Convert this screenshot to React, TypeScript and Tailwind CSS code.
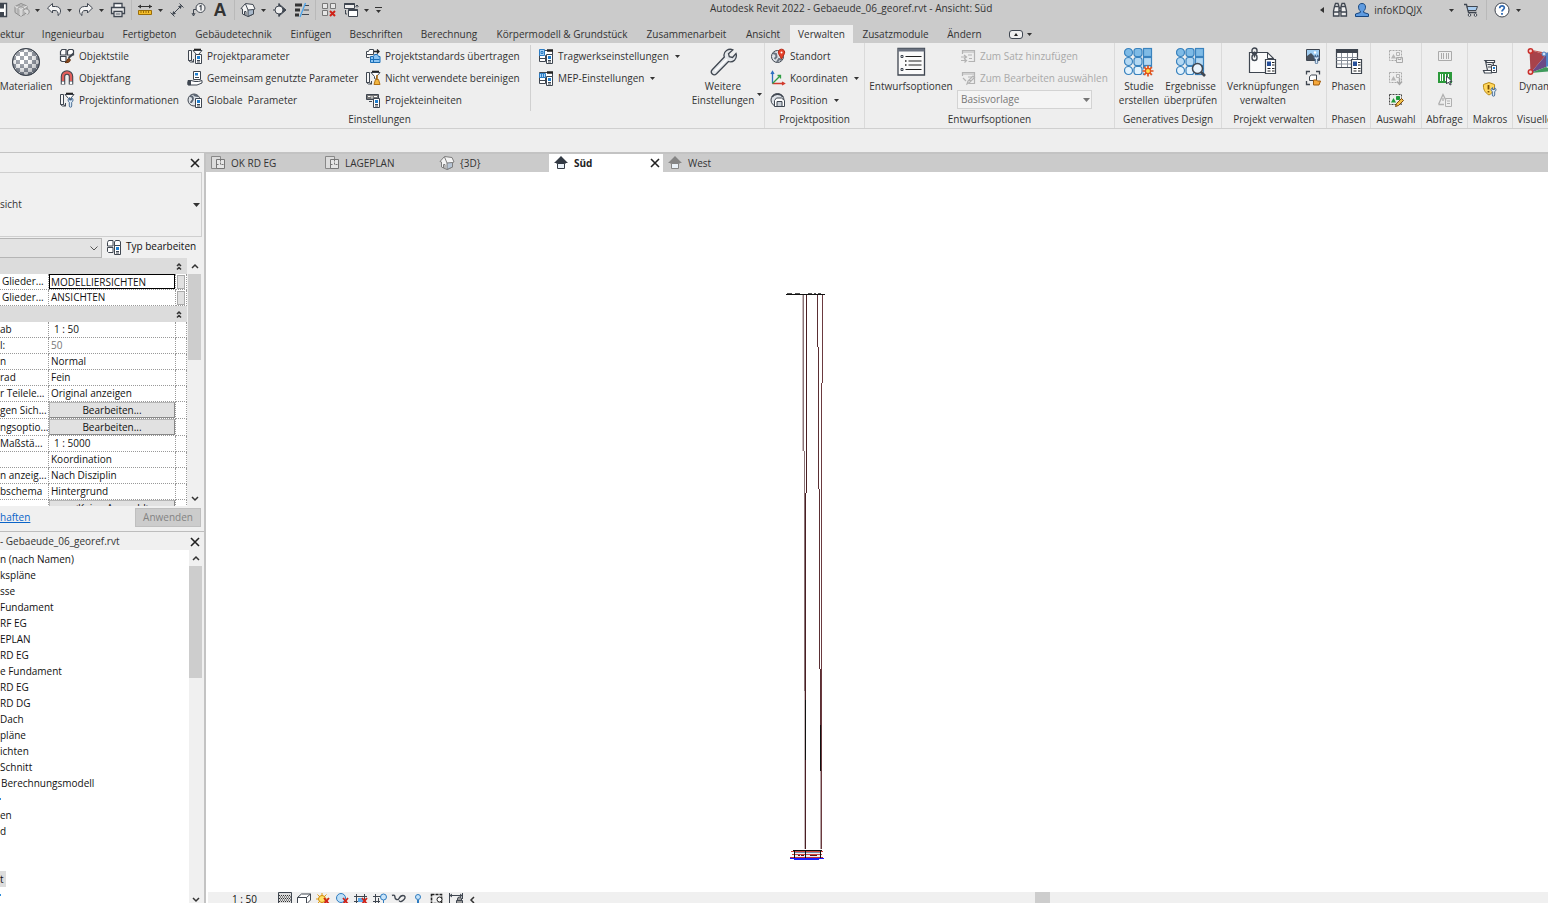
import type { ReactNode } from "react";
import clsx from "clsx";

const INK = "#3f4650";
const BLUE = "#1f7fd0";

type IconProps = { children: ReactNode; big?: boolean; className?: string };

function Icon({ children, big, className }: IconProps) {
  return (
    <svg
      viewBox={big ? "0 0 30 30" : "0 0 16 16"}
      className={clsx("shrink-0", big ? "h-[30px] w-[30px]" : "h-4 w-4", className)}
      fill="none"
      stroke={INK}
      strokeWidth="1"
      aria-hidden="true"
    >
      {children}
    </svg>
  );
}

function Caret({ className }: { className?: string }) {
  return (
    <svg viewBox="0 0 5 3" className={clsx("h-[3px] w-[5px] shrink-0", className)} aria-hidden="true">
      <path d="M0 0h5L2.500 3z" fill="#333" />
    </svg>
  );
}

function CaretButton({ label }: { label: string }) {
  return (
    <button type="button" aria-label={label} className="flex h-4 w-4 items-center justify-center pr-0.5">
      <Caret />
    </button>
  );
}

function Divider() {
  return <span className="mx-[5px] h-5 w-px shrink-0 bg-[#b9b9b9]" />;
}

/* ---------- shared icon parts ---------- */

// small sheet with a blue header, sits in the lower right corner of many icons
function MiniSheet() {
  return (
    <g>
      <path d="M8.500 6.500h6v9h-6z" fill="#fff" />
      <path d="M10 8h3v3h-3z" fill={BLUE} stroke="none" />
      <path d="M10 12.500h3M10 14h3" />
    </g>
  );
}

function BeamPart() {
  return <path d="M1.500 2.500h3v10h-3zM4.500 12.500l2 1.500v-3M1.500 12.500l2 1.500h3" fill="#f6f6f6" />;
}

function FunnelPart() {
  return (
    <g>
      <path d="M6 2.500h9l-3.500 4v3l-2-1v-2z" fill="#fff" />
      <path d="M7 1.500h7" stroke="#222" strokeWidth="1.600" />
    </g>
  );
}

/* ---------- quick access icons ---------- */

const SaveIcon = () => (
  <svg viewBox="0 0 8 16" className="h-4 w-2 shrink-0" fill="none" stroke={INK} aria-hidden="true">
    <path d="M0 1.500h6.500v13H0" fill="#fff" strokeWidth="1.400" />
    <path d="M0 2h4v4.500H0zM0 10h4v4.500H0z" fill={INK} stroke="none" />
  </svg>
);

const CubeIcon = () => (
  <Icon>
    <path d="M1 4.500L7 1.500l6 2.500v6.500l-6 4-6-4z" fill="#c3c3c3" stroke="#8d8d8d" />
    <path d="M1 4.500l6 3v7M7 7.500L13 4" stroke="#e8e8e8" />
    <path d="M4 3l6 3v7.500M10 2.800L4 6v6.500" stroke="#a2a2a2" />
    <path d="M9.500 8.500a3 3 0 1 1 4 4" stroke="#8d8d8d" fill="#d9d9d9" />
  </Icon>
);

const UndoIcon = ({ flip }: { flip?: boolean }) => (
  <Icon>
    <path
      d={flip
        ? "M14.500 6l-5-4.500v3H6.500C3 4.500 1.500 6.500 1.500 9c0 2 1 3.500 2.500 4.500-.5-3 .5-5 3-5h2.500v2.500z"
        : "M1.500 6l5-4.500v3h3c3.500 0 5 2 5 4.500 0 2-1 3.500-2.500 4.500.5-3-.5-5-3-5H6.500v2.500z"}
      fill="#f3f3f3"
    />
  </Icon>
);

const PrintIcon = () => (
  <Icon>
    <path d="M4 5.500v-4h8v4" fill="#fff" strokeWidth="1.300" />
    <path d="M1.500 5.500h13v6h-13z" fill="#e9e9e9" strokeWidth="1.300" />
    <path d="M4 9.500h8v5H4z" fill="#fff" strokeWidth="1.300" />
    <path d="M5.500 12h5" />
  </Icon>
);

const MeasureIcon = () => (
  <Icon>
    <path d="M1 4.500h14" stroke="#333" />
    <path d="M1 4.500l3-2v4zM15 4.500l-3-2v4z" fill="#333" stroke="none" />
    <path d="M1.500 8.500h13v4h-13z" fill="#f5bf2a" stroke="#9a6d08" />
    <path d="M4 9v2M6.500 9v2M9 9v2M11.500 9v2" stroke="#9a6d08" />
  </Icon>
);

const DimensionIcon = () => (
  <Icon>
    <path d="M3 13L13 3M1.500 10.500l4 4M10.500 1.500l4 4" />
    <path d="M3 13l1.200-4L7 11.800zM13 3L9 4.200 11.800 7z" fill={INK} stroke="none" />
  </Icon>
);

const TagIcon = () => (
  <Icon>
    <circle cx="9.500" cy="6" r="4.500" fill="#f3f3f3" />
    <path d="M8.500 4.500L10 3.500v5" strokeWidth="1.200" />
    <path d="M5 7.500H2.500v5M1 11l1.500 3L4 11" />
  </Icon>
);

const HouseIcon = ({ muted }: { muted?: boolean }) => (
  <Icon>
    <g stroke={muted ? "#7d7d7d" : INK}>
      <path d="M1 6.500L5.500 1.500l7.500 1 2 4.500-1.500.5V12L8 14.500 2.500 12V7z" fill="#f4f4f4" />
      <path d="M8 8l5.500-.5V12L8 14.500z" fill={muted ? "#b8c6d6" : "#a9b9cb"} />
      <path d="M8 8l-2.500-6M4.500 13V9.500H6v4" />
    </g>
  </Icon>
);

const SectionIcon = () => (
  <Icon>
    <path d="M7 2l7 6-7 6z" fill={INK} stroke={INK} />
    <circle cx="7" cy="8" r="4" fill="#eee" />
    <path d="M1 8h2M7 1v3M7 12v3" />
  </Icon>
);

const ThinLinesIcon = () => (
  <Icon>
    <path d="M1 3h7M1 8h5M1 13h4" stroke="#333" strokeWidth="3" />
    <path d="M11 3.500h4M9.500 8H15M8 12.500h7" />
    <path d="M11.500 1L6 15" stroke="#4aa3ea" strokeWidth="1.300" />
  </Icon>
);

const CloseHiddenIcon = () => (
  <Icon>
    <path d="M1.500 1.500h5v5h-5zM1.500 8.500h5v5h-5zM9.500 1.500h5v5h-5z" fill="#e6e6e6" stroke="#777" />
    <path d="M9 9l5 5M14 9l-5 5" stroke="#cf2218" strokeWidth="2" />
  </Icon>
);

const SwitchIcon = () => (
  <Icon>
    <path d="M1.500 1.500h10v5h-10z" fill="#eee" />
    <path d="M1.500 2h10" strokeWidth="2" />
    <path d="M5.500 7.500h9v7h-9z" fill="#fff" />
    <path d="M5.500 8h9" strokeWidth="2" />
    <path d="M14 5.500V3M12.500 4.500L14 3l1.500 1.500M2.500 8v4H4" />
  </Icon>
);

/* ---------- ribbon icons ---------- */

const MaterialIcon = () => {
  const cells = [];
  for (let r = 0; r < 7; r++) {
    for (let c = 0; c < 7; c++) {
      if ((r + c) % 2 === 0) cells.push(<rect key={`${r}-${c}`} x={1 + c * 4} y={1 + r * 4} width="4" height="4" />);
    }
  }
  return (
    <Icon big>
      <defs>
        <clipPath id="ball"><circle cx="15" cy="15" r="13.500" /></clipPath>
        <radialGradient id="shade" cx="0.400" cy="0.350" r="0.700">
          <stop offset="0.300" stopColor="#fff" stopOpacity="0.350" />
          <stop offset="1" stopColor="#333b47" stopOpacity="0.450" />
        </radialGradient>
      </defs>
      <circle cx="15" cy="15" r="13.500" fill="#fff" />
      <g clipPath="url(#ball)" fill="#6f7682" stroke="none">{cells}</g>
      <circle cx="15" cy="15" r="13.500" fill="url(#shade)" />
    </Icon>
  );
};

const ObjectStylesIcon = () => (
  <Icon>
    <path d="M1.500 3.500l1.500-2h4v5.500H1.500zM8.500 3l1.500-1.500h3.500l1 1V7h-6zM1.500 8.500h5.500v5H3l-1.500-1z" fill="#fff" strokeWidth="1.200" />
    <path d="M14.500 5.500L9.500 10" strokeWidth="2" />
    <path d="M6 14.500c2 0 1.500-4 4-4 2 .5 1.500 3-.5 3.800-1 .4-2.500.4-3.500.2z" fill="#8c4a1c" stroke="#5f3010" />
  </Icon>
);

const SnapIcon = () => (
  <Icon>
    <path d="M4 14.500V6.500a4 4 0 0 1 8 0v8" stroke={INK} strokeWidth="4.500" />
    <path d="M4 11V6.500a4 4 0 0 1 8 0V11" stroke="#e2605c" strokeWidth="2.400" />
    <path d="M4 11.500v2.500M12 11.500v2.500" stroke="#fff" strokeWidth="2.400" />
  </Icon>
);

const ProjectInfoIcon = () => (
  <Icon>
    <BeamPart />
    <FunnelPart />
    <path d="M10.500 5.500v2.500h2V5.500c2 1 2 4 .2 4.800V14a1.200 1.200 0 0 1-2.400 0v-3.700c-1.800-1-1.600-3.800.2-4.800z" fill="#dbe9f6" stroke="#4c6f96" />
  </Icon>
);

const ProjectParamIcon = () => (
  <Icon>
    <BeamPart />
    <FunnelPart />
    <MiniSheet />
  </Icon>
);

const SharedParamIcon = () => (
  <Icon>
    <path d="M6.500 1.500h7v8h-7z" fill="#fff" />
    <path d="M8 3h3v2.500H8z" fill={BLUE} stroke="none" />
    <path d="M8 7.500h4" />
    <path d="M1 12l3-1.500 4 1h3.500l3.500-1v2.500l-5 2H4l-3-.500z" fill="#fff" />
    <path d="M1 10.500h2.500v4.500H1z" fill={INK} />
  </Icon>
);

const GlobalParamIcon = () => (
  <Icon>
    <circle cx="7" cy="8" r="6" fill="#dfe3e8" />
    <path d="M3 4c2 0 3 1 3 3s-2 2-2 4M7 2c0 2 2 2 4 2" stroke="#5d6774" strokeWidth="1.800" />
    <MiniSheet />
  </Icon>
);

const TransferIcon = () => (
  <Icon>
    <path d="M1.500 3.500h2l1-2h4v5h-7zM1.500 6.500v3h3" fill="#fff" />
    <path d="M9 3.500h5M12 1.500l2 2-2 2" stroke="#222" strokeWidth="1.300" />
    <path d="M5.500 8.500h3l1-2h3l1 2h1.500v6h-9.500z" fill="#8cc4f2" stroke="#1b6fb8" />
    <path d="M8.500 9v5M5.500 11.500h9" stroke="#1b6fb8" />
  </Icon>
);

const PurgeIcon = () => (
  <Icon>
    <BeamPart />
    <FunnelPart />
    <path d="M12 5v5" stroke="#b06f13" strokeWidth="1.600" />
    <path d="M10.500 9.500h3l1.500 5H9z" fill="#f3b63f" stroke="#b06f13" />
  </Icon>
);

const UnitsIcon = () => (
  <Icon>
    <path d="M1.500 2.500h12v5h-12z" fill="#777" />
    <path d="M3 4.500h2.500M7 4v2.500M9 4.500h3" stroke="#fff" />
    <path d="M4 9.500h3" />
    <MiniSheet />
  </Icon>
);

const StructureSettingsIcon = ({ mep }: { mep?: boolean }) => (
  <Icon>
    <path d="M1.500 2.500h13v5h-7v6h-6z" fill="#fff" />
    <path d="M9 2.500h6" stroke="#222" strokeWidth="2.500" />
    <path d={mep ? "M1.500 3.500h6v4h-6zM3.500 3v4.500M5.500 3v4.500" : "M1.500 1.500h5v6h-5zM3 3.500h2v2H3z"} fill="#a9d2f5" stroke="#2b7cc4" />
    <path d="M1.500 10.500h6" />
    <MiniSheet />
  </Icon>
);

const WrenchIcon = () => (
  <Icon big>
    <path
      d="M18.500 3.500c2-1.300 4.500-1.500 6.300-.6l-4.300 3.800.8 3 3.200.8 3.500-4c.8 2.500.2 5-1.500 6.700-1.700 1.600-4 2-6 1.300L8.500 26.800c-2.800 2.800-7-1-4.300-4.100L16.300 10c-.8-2.500.2-5 2.200-6.500z"
      fill="#e4e7ea"
      strokeWidth="1.300"
    />
    <path d="M7 24L19 12" stroke="#fff" strokeWidth="1.500" />
  </Icon>
);

const LocationIcon = () => (
  <Icon>
    <circle cx="7.500" cy="8.500" r="6" fill="#dfe3e8" />
    <path d="M3 5l3 1 .5 3-2 2M7 14l2-3 3 1" stroke="#6b7480" strokeWidth="2" />
    <path d="M11.500 11L8.500 5.500a3.200 3.200 0 1 1 6 0z" fill="#e5402a" stroke="#b52a18" />
    <circle cx="11.500" cy="4.500" r="1" fill="#fff" stroke="none" />
  </Icon>
);

const CoordinatesIcon = () => (
  <Icon>
    <path d="M2.500 13.500V2M1 4l1.500-2.500L4 4" stroke="#2f6fc0" strokeWidth="1.300" />
    <path d="M2.500 13.500H14M12 12l2.500 1.500L12 15" stroke="#d13a2c" strokeWidth="1.300" />
    <path d="M2.500 13.500l8-8M7.500 5.500h3v3" stroke="#2f9e44" strokeWidth="1.300" />
  </Icon>
);

const PositionIcon = () => (
  <Icon>
    <circle cx="7.500" cy="8" r="6.500" fill="#dfe3e8" />
    <path d="M2 5c2-3 8-4 11 0" strokeWidth="1.500" />
    <path d="M4.500 8.500l2-2.500h5l3 2.500v6h-10z" fill="#fff" />
    <path d="M7 9.500h5v5H7z" fill="#c7ced6" />
  </Icon>
);

const DesignOptionsIcon = () => (
  <Icon big>
    <path d="M2 1.500h26.500v26.500H2z" fill="#fafafa" strokeWidth="1.300" />
    <path d="M2 3h26.500" strokeWidth="3" stroke="#6b7280" />
    <path d="M5 8.500h2v2H5zM5 21.500h2v2H5z" />
    <path d="M9.500 9.500h16M12.500 14h13M12.500 18h13M9.500 22.500h16" strokeWidth="1.200" stroke="#222" />
    <path d="M9 14h1.500M9 18h1.500" strokeWidth="1.600" stroke="#222" />
  </Icon>
);

const AddToSetIcon = ({ edit }: { edit?: boolean }) => (
  <Icon>
    <g stroke="#b3b3b3" strokeWidth="1.200">
      <path d="M2.500 6V2.500h12v11h-6" />
      <path d="M2 4h12.500M8 7h4M9 10.500h3" />
      {edit ? <path d="M7 14l1-3 5-5 1.500 1.500-5 5zM3 8l3 3" /> : <path d="M1 9h5M1 12.500h5M4 7l2.500 2L4 11M4.500 11l2 1.500-2 2" />}
    </g>
  </Icon>
);

const StudyIcon = ({ result }: { result?: boolean }) => (
  <Icon big>
    <g stroke="#3a83be" strokeWidth="1.200">
      {[5.5, 14.5, 23.5].map((y, i) => {
        const fill = ["#7fbbe6", "#b3d8f3", "#e2f2fd"][i];
        return (
          <g key={y} fill={fill}>
            <circle cx="4.500" cy={y} r="4" />
            <rect x="10" y={y - 4} width="8" height="8" rx="2.500" />
            <rect x="19.500" y={y - 4} width="8" height="8" />
          </g>
        );
      })}
    </g>
    {result ? (
      <g>
        <circle cx="21.500" cy="21.500" r="5" fill="#e9f3fb" strokeWidth="1.500" />
        <path d="M25 25l4 4" strokeWidth="2.600" />
      </g>
    ) : (
      <g>
        <circle cx="24" cy="24" r="5" fill="#eee" stroke="none" />
        <path d="M24 18.500v11M18.500 24h11M20.200 20.200l7.600 7.600M27.800 20.200l-7.600 7.600" stroke="#e0521e" strokeWidth="1.700" />
        <circle cx="24" cy="24" r="2.600" fill="#ffe14a" stroke="#e0521e" strokeWidth="1.300" />
      </g>
    )}
  </Icon>
);

function SheetLarge() {
  return (
    <g>
      <path d="M17.500 12.500h10v14h-10z" fill="#fff" strokeWidth="1.200" />
      <path d="M19 14.500h4v4.500h-4z" fill="#27509a" stroke="none" />
      <path d="M24 15.500h2.500M24 18h2.500M19.500 21.500h3M19.500 24h3M24 21.500h2.500M24 24h2.500" stroke="#222" strokeWidth="1.200" />
    </g>
  );
}

const ManageLinksIcon = () => (
  <Icon big>
    <path d="M1.500 5.500h18l6 6v14h-24z" fill="#fbfbfb" strokeWidth="1.200" />
    <path d="M19.500 5.500v6h6" />
    <g strokeWidth="1.400">
      <rect x="4" y="1" width="5" height="6" rx="2.500" />
      <rect x="4" y="7.500" width="5" height="6" rx="2.500" />
      <path d="M6.500 4.500v6" />
    </g>
    <SheetLarge />
  </Icon>
);

const PhasesIcon = () => (
  <Icon big>
    <path d="M2.500 2.500h21v18h-21z" fill="#fff" strokeWidth="1.200" />
    <path d="M2 4h22" strokeWidth="4" />
    <path d="M2.500 10.500h21M2.500 13.500h21M2.500 17h21M7.500 6v14M13.500 6v14M18.500 6v14" stroke="#8a919b" />
    <SheetLarge />
  </Icon>
);

const DecalIcon = () => (
  <Icon>
    <path d="M1.500 1.500h13v11h-13z" fill="#9fcdf2" />
    <path d="M2 12V8l4-3 4 4 4-1v4z" fill="#47505c" stroke="none" />
    <circle cx="10" cy="4.500" r="1.200" fill="#fff" stroke="none" />
    <path d="M10.500 7v2h2V7c2 1 2 3.500.2 4v3.500a1.200 1.200 0 0 1-2.400 0V11c-1.800-.8-1.600-3 .2-4z" fill="#dbe9f6" stroke="#4c6f96" />
  </Icon>
);

const StartViewIcon = () => (
  <Icon>
    <path d="M1.500 4.500v-3H5M11 1.500h3.500v3M1.500 11v3.500H5" strokeWidth="1.300" />
    <path d="M4.500 6.500l2-1.500h5v5.500h-7z" fill="#fff" />
    <path d="M8.500 10h3l1 1h3l-1.500 4h-5.500z" fill="#f7a93b" stroke="#9d5a0c" />
  </Icon>
);

const SelectionIcon = ({ variant }: { variant: "save" | "load" | "edit" }) => {
  const tone = variant === "edit" ? "#444" : "#a9a9a9";
  const shape = variant === "edit" ? "#1f9a3a" : "#b5b5b5";
  return (
    <Icon>
      <path d="M1.500 2.500h12v10h-12z" stroke={tone} strokeDasharray="2 1" />
      <path d="M3 10.500L5.500 6 8 10.500z" fill={shape} stroke="none" />
      <path d="M8.500 4.500h3v3h-3z" stroke={shape} fill={variant === "edit" ? shape : "none"} />
      {variant === "save" && <path d="M8.500 9.500h6v5h-6zM10 9.500v2h3v-2" fill="#eee" stroke={tone} />}
      {variant === "load" && <path d="M11.500 8v6M9 11.500l2.500 3 2.500-3" stroke={tone} strokeWidth="1.400" />}
      {variant === "edit" && <path d="M7.500 14.500l1-3 5-5 2 2-5 5z" fill="#f2c14a" stroke="#7c4a10" />}
    </Icon>
  );
};

const InquiryIcon = ({ variant }: { variant: "ids" | "select" | "warn" }) => (
  <Icon>
    {variant === "ids" && (
      <g stroke="#aaa">
        <path d="M1.500 3.500h13v9h-13z" />
        <path d="M4.500 5v6M6.500 5v6M9.500 5v6M11.500 5v6" />
      </g>
    )}
    {variant === "select" && (
      <g>
        <path d="M1 2h14v11H1z" fill="#2c9a3b" stroke="none" />
        <path d="M3.500 4v7M5.500 4v7M8.500 4v7M11.500 4v3" stroke="#fff" />
        <path d="M9.500 6v8l2-2 1.500 3 1.200-.6-1.500-2.900H15z" fill="#fff" />
      </g>
    )}
    {variant === "warn" && (
      <g stroke="#b0b0b0">
        <path d="M1.500 12.500L6 2.500l3 6M6 6v3M1.500 12.500H7" strokeWidth="1.300" />
        <path d="M8.500 6.500h6v8h-6zM10 9h3M10 11.500h3" />
      </g>
    )}
  </Icon>
);

const MacroManagerIcon = () => (
  <Icon>
    <path d="M3 1.500h9.500v2H5zM3.500 2l2 9.500M1.500 11.500h8v2.500h-7zM11 3.500l.5 3" fill="#fff" strokeWidth="1.200" />
    <path d="M5.500 5.500h4M6 8h3" />
    <path d="M9.500 6.500h5v7h-5z" fill="#fff" />
    <path d="M11 8h2v2h-2z" fill={BLUE} stroke="none" />
    <path d="M11 11.500h2" />
  </Icon>
);

const MacroSecurityIcon = () => (
  <Icon>
    <path d="M7 1.500l5.500 2c.5 4-1 8-5.500 10.500C2.500 11.500 1 7.500 1.500 3.500z" fill="#ffd65c" stroke="#b98a15" />
    <path d="M6.500 4v4.500M6.500 10v1.500" stroke="#7a4d00" strokeWidth="1.800" />
    <path d="M10.500 6.500v2h2v-2c2 1 2 3.500.2 4V14a1.200 1.200 0 0 1-2.400 0v-3.500c-1.800-.8-1.600-3 .2-4z" fill="#dbe9f6" stroke="#4c6f96" />
  </Icon>
);

const DynamoIcon = () => (
  <Icon big>
    <path d="M3.500 2.500L20 8 4.500 26z" fill="#a8424a" stroke="none" />
    <path d="M3.500 2.500l18 3.500-1.500 2z" fill="#c0514c" stroke="none" />
    <path d="M20 6l8-3v14l-8 3z" fill="#4f82c4" stroke="none" />
    <path d="M20 8v12L4.500 26z" fill="#6b4a86" stroke="none" />
    <path d="M4.500 26L20 20l8 4z" fill="#3f9a5c" stroke="none" />
    <g fill="#f8d4d1" stroke="#c9302c" strokeWidth="1.500">
      <circle cx="4.500" cy="4" r="2.200" />
      <circle cx="4.500" cy="25" r="2.200" />
    </g>
    <circle cx="18" cy="7" r="2" fill="#cfe2f7" stroke="#4f82c4" />
  </Icon>
);

const TypeEditIcon = () => (
  <Icon>
    <path d="M1.500 3.500l1-2h4.500V7H1.500zM8.500 3l1-1.500h4l1 1.500v4h-6zM1.500 8.500h5.500v5h-4.500l-1-1z" fill="#fff" />
    <MiniSheet />
  </Icon>
);

/* ---------- ribbon building blocks ---------- */

type SmallButtonProps = { icon: ReactNode; label: string; menu?: boolean; disabled?: boolean };

function SmallButton({ icon, label, menu, disabled }: SmallButtonProps) {
  return (
    <button
      type="button"
      disabled={disabled}
      className={clsx("flex h-[22px] items-center gap-1 whitespace-nowrap", disabled && "text-[#a9a9a9]")}
    >
      {icon}
      <span>{label}</span>
      {menu && <Caret className="ml-0.5" />}
    </button>
  );
}

function BigButton({ icon, lines, className }: { icon: ReactNode; lines: string[]; className?: string }) {
  return (
    <button type="button" className={clsx("flex flex-col items-center gap-0.5 whitespace-nowrap pt-0.5 leading-[14px]", className)}>
      {icon}
      <span className="flex flex-col items-center">
        {lines.map((l) => <span key={l}>{l}</span>)}
      </span>
    </button>
  );
}

function Panel({ title, className, children }: { title: string; className: string; children: ReactNode }) {
  return (
    <section className={clsx("flex shrink-0 flex-col border-r border-[#dadada] pt-0.5", className)}>
      <div className="flex h-[66px] items-start">{children}</div>
      <h2 className="whitespace-nowrap text-center leading-4">{title}</h2>
    </section>
  );
}

function Column({ className, children }: { className?: string; children: ReactNode }) {
  return <div className={clsx("flex h-[66px] shrink-0 flex-col", className)}>{children}</div>;
}

function IconButton({ label, children }: { label: string; children: ReactNode }) {
  return (
    <button type="button" aria-label={label} className="flex h-[22px] items-center justify-center">
      {children}
    </button>
  );
}

function TitleBar() {
  return (
    <header className="flex h-[21px] items-center justify-between">
      <div className="flex shrink-0 items-center pb-px">
        <button type="button" aria-label="Speichern"><SaveIcon /></button>
        <button type="button" aria-label="Synchronisieren" className="ml-1.5"><CubeIcon /></button>
        <CaretButton label="Synchronisieren Optionen" />
        <button type="button" aria-label="Rückgängig"><UndoIcon /></button>
        <CaretButton label="Rückgängig Liste" />
        <button type="button" aria-label="Wiederherstellen"><UndoIcon flip /></button>
        <CaretButton label="Wiederherstellen Liste" />
        <button type="button" aria-label="Drucken"><PrintIcon /></button>
        <Divider />
        <button type="button" aria-label="Messen"><MeasureIcon /></button>
        <CaretButton label="Messen Optionen" />
        <button type="button" aria-label="Bemaßung"><DimensionIcon /></button>
        <button type="button" aria-label="Beschriftung" className="ml-1.5"><TagIcon /></button>
        <button type="button" aria-label="Text" className="ml-1 w-[18px] text-center font-['Liberation_Sans',sans-serif] text-[18px] font-bold leading-5">A</button>
        <Divider />
        <button type="button" aria-label="3D-Ansicht"><HouseIcon /></button>
        <CaretButton label="3D-Ansicht Optionen" />
        <button type="button" aria-label="Schnitt"><SectionIcon /></button>
        <button type="button" aria-label="Dünne Linien" className="ml-1.5"><ThinLinesIcon /></button>
        <Divider />
        <button type="button" aria-label="Verdeckte schließen"><CloseHiddenIcon /></button>
        <button type="button" aria-label="Fenster wechseln" className="ml-1.5"><SwitchIcon /></button>
        <CaretButton label="Fensterliste" />
        <button type="button" aria-label="Schnellzugriff anpassen" className="flex flex-col items-center gap-0.5">
          <span className="h-px w-[7px] bg-[#333]" />
          <Caret />
        </button>
      </div>
      <h1 className="whitespace-nowrap pb-1">Autodesk Revit 2022 - Gebaeude_06_georef.rvt - Ansicht: Süd</h1>
      <div className="flex shrink-0 items-center pb-px pr-5">
        <button type="button" aria-label="Suche einklappen" className="mr-2">
          <svg viewBox="0 0 4 6" className="h-1.5 w-1"><path d="M4 0v6L0 3z" fill="#333" /></svg>
        </button>
        <button type="button" aria-label="Suchen">
          <Icon>
            <path d="M2.500 4.500l1-3h2.500l1 3v9.500h-5.500V9zM13.500 4.500l-1-3H10l-1 3v9.500h5.500V9z" fill="#eee" strokeWidth="1.300" />
            <path d="M7 6h2M7 9h2M2 10h5M9 10h5.500M2.500 4.500H7M9 4.500h4.500" strokeWidth="1.300" />
          </Icon>
        </button>
        <button type="button" className="ml-1.5 flex items-center gap-1 pr-[23px]">
          <Icon>
            <path d="M8 1.500c2.500 0 3.500 1.500 3.500 3.700 0 1.800-.8 3-1.800 3.800v1.500l4.800 1.500v2.500h-13V12l4.800-1.500V9c-1-.8-1.800-2-1.800-3.800C4.500 3 5.500 1.500 8 1.500z" fill="#5f9be0" stroke="#17467f" />
          </Icon>
          <span>infoKDQJX</span>
        </button>
        <CaretButton label="Kontomenü" />
        <button type="button" aria-label="App Store" className="ml-0.5 mr-0.5">
          <Icon>
            <path d="M1 2.500h2.500l2 8h8" strokeWidth="1.300" />
            <path d="M4 4.500h10.500l-1.500 4H5z" fill="#a9cdf0" />
            <circle cx="6.500" cy="13" r="1.300" fill="#fff" />
            <circle cx="12.500" cy="13" r="1.300" fill="#fff" />
          </Icon>
        </button>
        <Divider />
        <button type="button" aria-label="Hilfe" className="ml-0.5 mr-0.5">
          <Icon>
            <circle cx="8" cy="8" r="7" fill="#fff" />
            <path d="M5.700 6.200C5.700 3 10.500 3.200 10.300 6c-.2 1.600-2.300 1.700-2.300 3.500M8 11v1.700" stroke="#2a66b0" strokeWidth="1.800" />
          </Icon>
        </button>
        <CaretButton label="Hilfe Menü" />
      </div>
    </header>
  );
}

const ribbonTabs = [
  { label: "ektur", width: "w-[33px] text-left" },
  { label: "Ingenieurbau", width: "w-20" },
  { label: "Fertigbeton", width: "w-[73px]" },
  { label: "Gebäudetechnik", width: "w-[95px]" },
  { label: "Einfügen", width: "w-[60px]" },
  { label: "Beschriften", width: "w-[70px]" },
  { label: "Berechnung", width: "w-[76px]" },
  { label: "Körpermodell & Grundstück", width: "w-[150px]" },
  { label: "Zusammenarbeit", width: "w-[99px]" },
  { label: "Ansicht", width: "w-[54px]" },
  { label: "Verwalten", width: "w-[63px]", active: true },
  { label: "Zusatzmodule", width: "w-[85px]" },
  { label: "Ändern", width: "w-[53px]" },
];

function RibbonTabs() {
  return (
    <nav className="flex h-[22px] items-end" aria-label="Ribbon">
      {ribbonTabs.map((t) => (
        <button
          key={t.label}
          type="button"
          className={clsx("h-[18px] shrink-0 whitespace-nowrap text-center leading-[18px]", t.width, t.active && "bg-[#eeeeee]")}
        >
          {t.label}
        </button>
      ))}
      <button type="button" aria-label="Ribbon minimieren" className="ml-[18px] flex h-[18px] items-center gap-1">
        <svg viewBox="0 0 14 9" className="h-[9px] w-3.5" fill="none">
          <rect x="0.500" y="0.500" width="13" height="8" rx="2.500" fill="#eee" stroke={INK} />
          <path d="M5 6h4L7 3z" fill="#222" />
        </svg>
        <Caret />
      </button>
    </nav>
  );
}

function Ribbon() {
  return (
    <div className="flex h-[86px] shrink-0 overflow-hidden border-b border-[#cfcfcf] bg-[#eeeeee]">
      <section className="flex w-[765px] shrink-0 flex-col border-r border-[#dadada] pt-0.5">
        <div className="flex h-[66px] items-start">
          <BigButton className="w-14 pr-1" icon={<MaterialIcon />} lines={["Materialien"]} />
          <Column className="w-[128px] pl-[3px]">
            <SmallButton icon={<ObjectStylesIcon />} label="Objektstile" />
            <SmallButton icon={<SnapIcon />} label="Objektfang" />
            <SmallButton icon={<ProjectInfoIcon />} label="Projektinformationen" />
          </Column>
          <Column className="w-[178px] pl-[3px]">
            <SmallButton icon={<ProjectParamIcon />} label="Projektparameter" />
            <SmallButton icon={<SharedParamIcon />} label="Gemeinsam genutzte Parameter" />
            <SmallButton icon={<GlobalParamIcon />} label={"Globale\u00a0 Parameter"} />
          </Column>
          <Column className="w-[169px] border-r border-[#d0d0d0] pl-[3px]">
            <SmallButton icon={<TransferIcon />} label="Projektstandards übertragen" />
            <SmallButton icon={<PurgeIcon />} label="Nicht verwendete bereinigen" />
            <SmallButton icon={<UnitsIcon />} label="Projekteinheiten" />
          </Column>
          <Column className="w-[157px] pl-[7px]">
            <SmallButton icon={<StructureSettingsIcon />} label="Tragwerkseinstellungen" menu />
            <SmallButton icon={<StructureSettingsIcon mep />} label="MEP-Einstellungen" menu />
          </Column>
          <BigButton className="w-[70px]" icon={<WrenchIcon />} lines={["Weitere", "Einstellungen"]} />
          <Caret className="mt-12 -ml-px" />
        </div>
        <h2 className="pr-[5px] text-center leading-4">Einstellungen</h2>
      </section>

      <Panel title="Projektposition" className="w-[100px]">
        <Column className="pl-[5px]">
          <SmallButton icon={<LocationIcon />} label="Standort" />
          <SmallButton icon={<CoordinatesIcon />} label="Koordinaten" menu />
          <SmallButton icon={<PositionIcon />} label="Position" menu />
        </Column>
      </Panel>

      <Panel title="Entwurfsoptionen" className="w-[250px]">
        <BigButton className="w-[92px]" icon={<DesignOptionsIcon />} lines={["Entwurfsoptionen"]} />
        <Column>
          <div className="pl-[3px]">
            <SmallButton icon={<AddToSetIcon />} label="Zum Satz hinzufügen" disabled />
          </div>
          <div className="pl-[3px]">
            <SmallButton icon={<AddToSetIcon edit />} label="Zum Bearbeiten auswählen" disabled />
          </div>
          <div className="relative mt-px self-start">
            <select
              aria-label="Aktive Entwurfsoption"
              className="block h-[19px] w-[135px] appearance-none border border-[#d3d3d3] bg-[#f4f4f4] pl-[3px] text-[#777]"
              defaultValue="Basisvorlage"
            >
              <option>Basisvorlage</option>
            </select>
            <svg viewBox="0 0 7 4" className="pointer-events-none absolute right-0.5 top-2 h-1 w-[7px]"><path d="M0 0h7L3.500 4z" fill="#777" /></svg>
          </div>
        </Column>
      </Panel>

      <Panel title="Generatives Design" className="w-[107px]">
        <BigButton className="w-12" icon={<StudyIcon />} lines={["Studie", "erstellen"]} />
        <BigButton className="w-[55px]" icon={<StudyIcon result />} lines={["Ergebnisse", "überprüfen"]} />
      </Panel>

      <Panel title="Projekt verwalten" className="w-[105px]">
        <BigButton className="w-[82px]" icon={<ManageLinksIcon />} lines={["Verknüpfungen", "verwalten"]} />
        <Column className="pl-px">
          <IconButton label="Abziehbilder"><DecalIcon /></IconButton>
          <IconButton label="Startansicht"><StartViewIcon /></IconButton>
        </Column>
      </Panel>

      <Panel title="Phasen" className="w-11">
        <BigButton className="w-full" icon={<PhasesIcon />} lines={["Phasen"]} />
      </Panel>

      <Panel title="Auswahl" className="w-[51px]">
        <Column className="w-full">
          <IconButton label="Auswahl speichern"><SelectionIcon variant="save" /></IconButton>
          <IconButton label="Auswahl laden"><SelectionIcon variant="load" /></IconButton>
          <IconButton label="Auswahl bearbeiten"><SelectionIcon variant="edit" /></IconButton>
        </Column>
      </Panel>

      <Panel title="Abfrage" className="w-[46px]">
        <Column className="w-full">
          <IconButton label="IDs der Auswahl"><InquiryIcon variant="ids" /></IconButton>
          <IconButton label="Nach ID auswählen"><InquiryIcon variant="select" /></IconButton>
          <IconButton label="Warnungen"><InquiryIcon variant="warn" /></IconButton>
        </Column>
      </Panel>

      <Panel title="Makros" className="w-[45px]">
        <Column className="w-full justify-center">
          <IconButton label="Makro-Manager"><MacroManagerIcon /></IconButton>
          <IconButton label="Makro-Sicherheit"><MacroSecurityIcon /></IconButton>
        </Column>
      </Panel>

      <section className="flex min-w-0 flex-1 flex-col items-start overflow-hidden whitespace-nowrap pt-0.5">
        <button type="button" className="flex h-[66px] flex-col gap-0.5 pl-1.5 pt-0.5 text-left leading-[14px]">
          <span className="pl-[7px]"><DynamoIcon /></span>
          <span>Dynamo</span>
        </button>
        <h2 className="pl-1 leading-4">Visuelle</h2>
      </section>
    </div>
  );
}

/* ---------- left side palettes ---------- */

function CloseIcon() {
  return (
    <svg viewBox="0 0 10 10" className="h-2.5 w-2.5 shrink-0" aria-hidden="true">
      <path d="M1 1l8 8M9 1L1 9" stroke="#222" strokeWidth="1.600" />
    </svg>
  );
}

function Chevron({ up, double }: { up?: boolean; double?: boolean }) {
  return (
    <svg viewBox="0 0 8 8" className={clsx("h-2 w-2", !up && "rotate-180")} fill="none" stroke="#333" strokeWidth="1.500" aria-hidden="true">
      <path d={double ? "M2 4l2-2 2 2M2 7.500l2-2 2 2" : "M1 6l3-3 3 3"} />
    </svg>
  );
}

function ScrollBar({ thumb, end }: { thumb: string; end: string }) {
  return (
    <div className="flex w-[13px] shrink-0 flex-col items-center bg-[#f0f0f0]">
      <span className="flex h-4 items-center"><Chevron up /></span>
      <span className={clsx("w-full bg-[#cdcdcd]", thumb)} />
      <span className={clsx("mt-auto flex items-center", end)}><Chevron /></span>
    </div>
  );
}

type PropRow = { group?: boolean; name?: string; value?: string; kind?: "input" | "button" | "muted" | "scale"; extra?: boolean };

const propRows: PropRow[] = [
  { group: true },
  { name: "Glieder...", value: "MODELLIERSICHTEN", kind: "input", extra: true },
  { name: "Glieder...", value: "ANSICHTEN", extra: true },
  { group: true },
  { name: "ab", value: "1 : 50", kind: "scale" },
  { name: "l:", value: "50", kind: "muted" },
  { name: "n", value: "Normal" },
  { name: "rad", value: "Fein" },
  { name: "r Teilele...", value: "Original anzeigen" },
  { name: "gen Sich...", value: "Bearbeiten...", kind: "button" },
  { name: "ngsoptio...", value: "Bearbeiten...", kind: "button" },
  { name: "Maßstä...", value: "1 : 5000", kind: "scale" },
  { name: "", value: "Koordination" },
  { name: "n anzeig...", value: "Nach Disziplin" },
  { name: "bschema", value: "Hintergrund" },
  { name: "", value: "<Keine Auswahl>", kind: "button" },
];

const cell = "h-4 overflow-hidden whitespace-nowrap border-b border-r border-dotted border-[#999] p-0 leading-[15px]";

function PropertyValue({ row }: { row: PropRow }) {
  if (row.kind === "input") {
    return (
      <input
        aria-label="Gliederung"
        defaultValue={row.value}
        className="block h-[15px] w-full border border-black bg-white pl-px leading-[13px] outline-none"
      />
    );
  }
  if (row.kind === "button") {
    return (
      <button type="button" className="block h-4 w-full border border-[#b5b5b5] border-b-[#8a8a8a] border-r-[#8a8a8a] bg-[#e1e1e1] text-center leading-[14px]">
        {row.value}
      </button>
    );
  }
  return <span className={clsx(row.kind === "scale" ? "pl-[5px]" : "pl-0.5", row.kind === "muted" && "text-[#777]")}>{row.value}</span>;
}

function Properties() {
  return (
    <section className="flex h-[378px] shrink-0 flex-col">
      <div className="flex h-[18px] items-center justify-end pr-1 pt-0.5">
        <button type="button" aria-label="Eigenschaften schließen"><CloseIcon /></button>
      </div>
      <button type="button" className="mr-0.5 mt-px flex h-[65px] items-center justify-between border border-l-0 border-[#cfcfcf] pr-px text-left">
        <span>sicht</span>
        <svg viewBox="0 0 7 4" className="h-1 w-[7px]"><path d="M0 0h7L3.500 4z" fill="#333" /></svg>
      </button>
      <div className="flex h-[21px] items-center">
        <button type="button" aria-label="Ansichtstyp" className="flex h-5 w-[102px] items-center justify-end border border-l-0 border-[#b5b5b5] bg-[#e3e3e3] pr-[3px]">
          <svg viewBox="0 0 8 8" className="h-2 w-2" fill="none" stroke="#555"><path d="M0.500 2.500L4 6l3.500-3.500" /></svg>
        </button>
        <button type="button" className="ml-1 flex items-center gap-1 whitespace-nowrap pb-0.5 text-[#111]">
          <TypeEditIcon />
          Typ bearbeiten
        </button>
      </div>
      <div className="flex min-h-0 flex-1 overflow-hidden text-[#111]">
        <div className="h-full w-[187px] shrink-0 overflow-hidden bg-white">
          <table className="w-full table-fixed border-separate border-spacing-0">
            <colgroup>
              <col className="w-[49px]" />
              <col />
              <col className="w-[11px]" />
            </colgroup>
            <tbody>
              {propRows.map((row, i) =>
                row.group ? (
                  <tr key={i}>
                    <td colSpan={3} className="h-4 bg-[#dcdcdc] p-0">
                      <button type="button" aria-label="Gruppe einklappen" className="ml-auto mr-1 block">
                        <Chevron up double />
                      </button>
                    </td>
                  </tr>
                ) : (
                  <tr key={i}>
                    <th scope="row" className={clsx(cell, "text-left font-normal", row.extra && "pl-0.5")}>{row.name}</th>
                    <td className={cell}><PropertyValue row={row} /></td>
                    <td className={cell}>
                      {row.extra && <button type="button" aria-label="Zuordnen" className="ml-px block h-3.5 w-2 border border-[#aaa] bg-[#e1e1e1]" />}
                    </td>
                  </tr>
                ),
              )}
            </tbody>
          </table>
        </div>
        <div className="ml-px flex"><ScrollBar thumb="h-[86px]" end="h-[15px]" /></div>
      </div>
      <div className="flex h-[25px] items-start justify-between pr-[3px] pt-0.5">
        <a href="#hilfe" className="leading-[18px] text-[#0a64c8] underline">haften</a>
        <button type="button" disabled className="h-[19px] w-[66px] border border-[#bfbfbf] bg-[#cccccc] text-[#838383]">Anwenden</button>
      </div>
    </section>
  );
}

const treeRows = [
  "n (nach Namen)", "kspläne", "sse", "Fundament", "RF EG", "EPLAN", "RD EG", "e Fundament", "RD EG", "RD DG", "Dach",
  "pläne", "ichten", "Schnitt", "Berechnungsmodell", "", "en", "d", "", "", "t", "",
];

// rows whose coloured tree icon still peeks in at the left edge
const iconRows = [15, 21];

function ProjectBrowser() {
  return (
    <section className="flex min-h-0 flex-1 flex-col border-t border-[#bdbdbd]">
      <div className="flex h-[18px] shrink-0 items-center justify-between pr-1 pt-px">
        <h2>- Gebaeude_06_georef.rvt</h2>
        <button type="button" aria-label="Projektbrowser schließen"><CloseIcon /></button>
      </div>
      <div className="flex min-h-0 flex-1 overflow-hidden text-[#111]">
        <ul className="flex-1 overflow-hidden bg-white pt-px leading-4">
          {treeRows.map((row, i) => (
            <li key={i} className="flex h-4 items-center whitespace-nowrap">
              {iconRows.includes(i) && <span className="h-0.5 w-px bg-[#2f8fdc]" />}
              <span className={clsx(row === "t" && "bg-[#dddddd] pr-0.5", row === "Berechnungsmodell" && "pl-px")}>{row}</span>
            </li>
          ))}
        </ul>
        <div className="mr-0.5 flex"><ScrollBar thumb="h-28" end="h-1.5" /></div>
      </div>
    </section>
  );
}

/* ---------- view area ---------- */

const PlanTabIcon = () => (
  <Icon className="-ml-px">
    <path d="M1.500 1.500h9v12h-9z" stroke="#888" fill="#dcdcdc" />
    <path d="M6.500 4.500h8v9h-8z" stroke="#777" fill="#e6e6e6" />
    <path d="M6.500 9.500h3M10.500 4.500v5h4" stroke="#777" strokeDasharray="2 1" />
  </Icon>
);

const ElevationTabIcon = ({ muted }: { muted?: boolean }) => (
  <Icon>
    <path d="M8 1l7 7h-2.500v1h-9V8H1z" fill={muted ? "#858585" : "#333a44"} stroke="none" />
    <path d="M4.500 8.500h7v5h-7z" fill="#eaf1f8" stroke={muted ? "#858585" : "#333a44"} />
  </Icon>
);

const viewTabs = [
  { label: "OK RD EG", icon: <PlanTabIcon /> },
  { label: "LAGEPLAN", icon: <PlanTabIcon /> },
  { label: "{3D}", icon: <HouseIcon muted /> },
  { label: "Süd", icon: <ElevationTabIcon />, active: true },
  { label: "West", icon: <ElevationTabIcon muted /> },
];

function ViewTabs() {
  return (
    <div role="tablist" className="flex h-[19px] shrink-0 border-t border-[#c3c3c3] bg-[#cbcbcb] pl-px">
      {viewTabs.map((t) => (
        <div
          key={t.label}
          className={clsx("flex w-[114px] items-center justify-between pl-1 pr-[3px]", t.active && "bg-white font-bold text-[#222]")}
        >
          <button type="button" role="tab" aria-selected={!!t.active} className="flex items-center gap-[5px]">
            {t.icon}
            {t.label}
          </button>
          {t.active && <button type="button" aria-label="Ansicht schließen"><CloseIcon /></button>}
        </div>
      ))}
    </div>
  );
}

function ElevationDrawing() {
  return (
    <svg viewBox="0 0 42 570" className="absolute left-[579px] top-[121px] h-[570px] w-[42px]" fill="none" shapeRendering="crispEdges" aria-label="Ansicht Süd">
      <path d="M1 1.500h39" stroke="#111" />
      <path d="M2 0.500h5M10 0.500h5M23 0.500h4M29 0.500h2M33 0.500h3" stroke="#555" />
      {/* left column */}
      <path d="M18.500 2v156M19.500 158v240" stroke="#8a7477" />
      <path d="M17.500 2v156" stroke="#c9bcbe" />
      <path d="M19.500 398v158" stroke="#c9bcbe" />
      <path d="M21.500 2v198M20.500 200v356" stroke="#4a1f24" />
      <path d="M20.500 407v60" stroke="#111" />
      {/* right column */}
      <path d="M32.500 2v52M33.500 54v142M34.500 196v180M35.500 376v56" stroke="#5a2f34" />
      <path d="M37.500 2v88M36.500 90v466" stroke="#6b3a3f" />
      <path d="M35.500 478v78" stroke="#b5a3a5" />
      <path d="M35.500 432v46" stroke="#111" />
      {/* base */}
      <path d="M9 558h27v8H9z" fill="#eceff5" />
      <path d="M8 557.500h29" stroke="#111" />
      <path d="M6 558.500h32M7 561.500h30" stroke="#d0443c" />
      <path d="M9 559.500h27" stroke="#7f8ca8" />
      <path d="M13 562.500h2M16 562.500h3M25 562.500h7" stroke="#5a1414" />
      <path d="M5 564.500h33" stroke="#c22f3c" />
      <path d="M5 565.500h34M9 566.500h25" stroke="#1a1aff" />
      <path d="M9.500 557v8M20.500 557v8M35.500 557v8" stroke="#111" />
    </svg>
  );
}

function ViewControlBar() {
  return (
    <footer className="ml-0.5 flex h-[11px] shrink-0 items-start overflow-hidden bg-[#f0f0f0] text-[#111]">
      <button type="button" className="ml-6 w-[45px] text-left leading-[14px]">1 : 50</button>
      <div className="flex items-start gap-[3px]">
        <button type="button" aria-label="Detaillierungsgrad"><Icon>
          <path d="M1.500 0.500h13v12h-13z" fill="#ddd" />
          <path d="M2 3.500h12M2 6.500h12M2 9.500h12" strokeDasharray="1 1" stroke="#333" />
          <path d="M3 5h12M3 8h12" strokeDasharray="1 1" stroke="#333" />
        </Icon></button>
        <button type="button" aria-label="Bildstil"><Icon>
          <path d="M1.500 5.500l4-3.500h9v6l-4 4h-9zM1.500 5.500h9v6M10.500 5.500L14.500 2" fill="#fff" />
        </Icon></button>
        <button type="button" aria-label="Sonnenbahn"><Icon>
          <path d="M7 1v12M1 7h12M2.500 2.500l9 9M11.500 2.500l-9 9" stroke="#e09a12" />
          <circle cx="7" cy="7" r="3.500" fill="#ffe26b" stroke="#d08a0a" />
          <path d="M9 6l5 6M14 6l-5 6" stroke="#cf2218" strokeWidth="1.800" />
        </Icon></button>
        <button type="button" aria-label="Schatten"><Icon>
          <circle cx="7" cy="6" r="4.500" fill="#bfe0f7" stroke="#2f7cc0" />
          <path d="M2 12h6" />
          <path d="M9 6l5 6M14 6l-5 6" stroke="#cf2218" strokeWidth="1.800" />
        </Icon></button>
        <button type="button" aria-label="Zuschneiden"><Icon>
          <path d="M3.500 2v10M1 4.500h13M1 9.500h7M11.500 2v8" />
          <path d="M5 6h5v4H5z" fill="#5aa7e8" stroke="none" />
          <path d="M9 6l5 6M14 6l-5 6" stroke="#cf2218" strokeWidth="1.800" />
        </Icon></button>
        <button type="button" aria-label="Zuschneidebereich"><Icon>
          <path d="M3.500 2v10M1 4.500h8M1 9.500h7M6.500 6v5" />
          <circle cx="11.500" cy="5" r="3" fill="#c9e5fa" stroke="#2f7cc0" />
          <path d="M11.500 8v4" stroke="#2f7cc0" />
        </Icon></button>
        <button type="button" aria-label="Temporär ausblenden"><Icon>
          <path d="M1 3.500c2-1 3 0 3 2s3 3 4 1 2-3 4-3 3 2 1 4-4 3-5 1" strokeWidth="1.400" />
        </Icon></button>
        <button type="button" aria-label="Verdeckte Elemente"><Icon>
          <circle cx="8" cy="5" r="2.500" fill="#c9e5fa" stroke="#2f7cc0" />
          <path d="M8 8v5" stroke="#2f7cc0" strokeWidth="2" />
        </Icon></button>
        <button type="button" aria-label="Temporäre Eigenschaften"><Icon>
          <path d="M2.500 2.500h10v9h-10z" strokeDasharray="3 1" strokeWidth="1.600" stroke="#222" />
          <circle cx="10.500" cy="7.500" r="2.500" fill="#fff" stroke="#222" />
        </Icon></button>
        <button type="button" aria-label="Abhängigkeiten"><Icon>
          <path d="M1.500 1v13M14.500 1v6M2 3.500h12M4 2L2 3.500 4 5M12 2l2 1.500L12 5" />
          <path d="M9.500 8V7a2 2 0 0 1 4 0v1M8.500 8.500h6v4h-6z" fill="#999" />
        </Icon></button>
      </div>
      <div className="flex h-full flex-1 items-center">
        <button type="button" aria-label="Nach links" className="ml-1 pt-1">
          <svg viewBox="0 0 8 8" className="h-2 w-2" fill="none" stroke="#333" strokeWidth="1.500"><path d="M6 1L3 4l3 3" /></svg>
        </button>
        <span className="ml-[51.6%] h-full w-[15px] bg-[#cdcdcd]" />
      </div>
    </footer>
  );
}

export default function App() {
  return (
    <div className="flex h-screen flex-col overflow-hidden bg-[#cbcbcb] font-['Open_Sans','Noto_Sans',sans-serif] text-[10px] text-[#333]">
      <TitleBar />
      <RibbonTabs />
      <Ribbon />
      <div className="h-[23px] shrink-0 bg-[#eeeeee]" />
      <main className="flex min-h-0 flex-1 border-t border-[#c3c3c3]">
        <aside className="flex w-[204px] shrink-0 flex-col bg-[#f0f0f0]">
          <Properties />
          <ProjectBrowser />
        </aside>
        <div className="flex min-w-0 flex-1 flex-col border-l-2 border-[#c3c3c3] bg-white">
          <ViewTabs />
          <div className="relative min-h-0 flex-1 overflow-hidden">
            <ElevationDrawing />
          </div>
          <ViewControlBar />
        </div>
      </main>
    </div>
  );
}
